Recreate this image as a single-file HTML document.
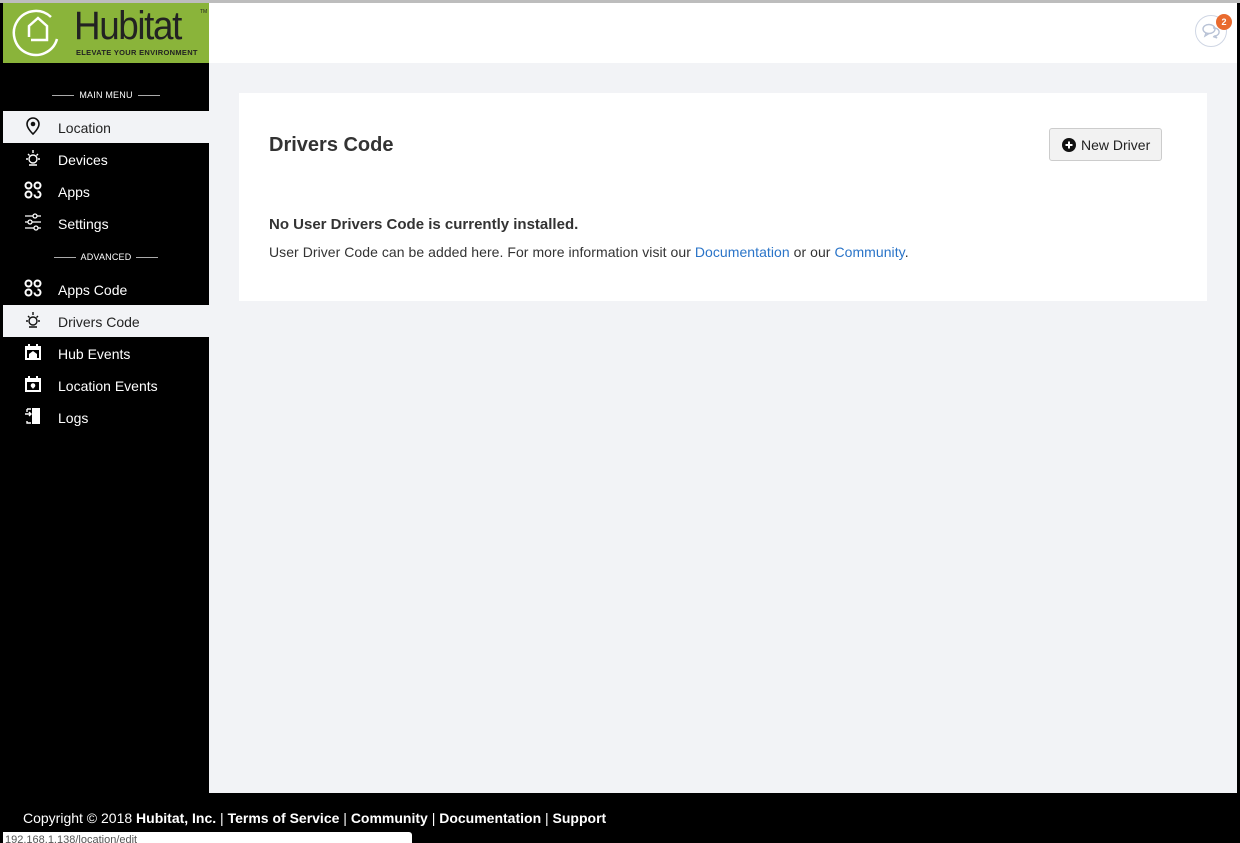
<!DOCTYPE html>
<html><head><meta charset="utf-8"><style>
*{box-sizing:border-box;margin:0;padding:0}
body{width:1240px;height:843px;position:relative;overflow:hidden;background:#000;font-family:"Liberation Sans",Arial,sans-serif;color:#333}
.topline{position:absolute;left:0;top:0;width:1240px;height:3px;background:#bdbdbd}
.header{position:absolute;left:209px;top:3px;width:1028px;height:60px;background:#fff}
.main{position:absolute;left:209px;top:63px;width:1028px;height:730px;background:#f2f3f6}
.logo{position:absolute;left:3px;top:3px;width:206px;height:60px;background:#8ab43a}
.side{position:absolute;left:3px;top:63px;width:206px;height:730px;background:#000}
.sec{position:absolute;left:0;width:206px;text-align:center;color:#fff;font-size:9px;letter-spacing:.2px}
.sec span{display:inline-block;width:22px;height:1px;background:#aaa;vertical-align:middle;margin:0 5px}
.item{position:absolute;left:0;width:206px;height:32px;color:#fff;font-size:14px;line-height:34px;padding-left:55px}
.item.act{background:#f2f3f6;color:#222}
.item svg{position:absolute;left:21px;top:6px}
.card{position:absolute;left:239px;top:93px;width:968px;height:208px;background:#fff}
.btn{position:absolute;left:810px;top:35px;width:113px;height:33px;border:1px solid #ccc;border-radius:3px;background:#f2f2f2;font-size:14px;color:#222;line-height:33px;padding-left:31px}
.footer{position:absolute;left:23px;top:810px;color:#fff;font-size:14px}
.footer b{font-weight:bold}
a{color:#2a74c8;text-decoration:none}
</style></head><body>
<div class="topline"></div>
<div class="header">
 <div style="position:absolute;left:986px;top:12px;width:32px;height:32px;border:1px solid #cfd6e4;border-radius:50%"></div>
 <svg style="position:absolute;left:993px;top:19px" width="18" height="18" viewBox="0 0 18 18" fill="none" stroke="#b9c3d6" stroke-width="1.4"><ellipse cx="7" cy="7" rx="6" ry="4.5"/><path d="M4 11 L3 14 L7 11.5"/><path d="M11 6 a5 4 0 1 1 2 8 l2 2 l-4 -1.5"/></svg>
 <div style="position:absolute;left:1007px;top:11px;width:16px;height:16px;border-radius:50%;background:#e96a2e;color:#fff;font-size:9px;font-weight:bold;text-align:center;line-height:16px">2</div>
</div>
<div class="main"></div>
<div class="logo">
 <svg style="position:absolute;left:8px;top:6px" width="56" height="50" viewBox="0 0 56 50" fill="none" stroke="#fff" stroke-width="2.5"><path d="M40 8 A22 22 0 1 0 46 30"/><path d="M18 28 V17 L27 9 L36 17 V31 H20"/></svg>
 <div style="position:absolute;left:71px;top:1px;font-size:40px;color:#222;letter-spacing:-1.5px;line-height:44px;transform:scaleX(0.92);transform-origin:left">Hubitat</div>
 <div style="position:absolute;left:197px;top:6px;font-size:5px;color:#222">TM</div>
 <div style="position:absolute;left:73px;top:45px;font-size:7.5px;font-weight:bold;color:#222;letter-spacing:.3px">ELEVATE YOUR ENVIRONMENT</div>
</div>
<div class="side">
 <div class="sec" style="top:27px"><span></span>MAIN MENU<span></span></div>
 <div class="item act" style="top:48px"><svg width="18" height="18" viewBox="0 0 18 18"><path d="M9 1a6 6 0 0 0-6 6c0 4.5 6 10 6 10s6-5.5 6-10a6 6 0 0 0-6-6z" fill="none" stroke="#111" stroke-width="1.6"/><circle cx="9" cy="7" r="2.3" fill="#111"/></svg>Location</div>
 <div class="item" style="top:80px"><svg width="18" height="18" viewBox="0 0 18 18" fill="none" stroke="#fff" stroke-width="1.4"><circle cx="9" cy="10" r="4"/><path d="M9 1v3M2 10h2M14 10h2M4 5l1.5 1.5M14 5l-1.5 1.5M5 16h8"/></svg>Devices</div>
 <div class="item" style="top:112px"><svg width="18" height="18" viewBox="0 0 18 18" fill="none" stroke="#fff" stroke-width="2"><circle cx="4.5" cy="4.5" r="3"/><circle cx="13.5" cy="4.5" r="3"/><circle cx="4.5" cy="13.5" r="3"/><path d="M10.5 13.5a3 3 0 1 0 3-3"/></svg>Apps</div>
 <div class="item" style="top:144px"><svg width="18" height="18" viewBox="0 0 18 18" fill="none" stroke="#fff" stroke-width="1.3"><path d="M1 3h16M1 9h16M1 15h16"/><circle cx="11" cy="3" r="2" fill="#000"/><circle cx="6" cy="9" r="2" fill="#000"/><circle cx="12" cy="15" r="2" fill="#000"/></svg>Settings</div>
 <div class="sec" style="top:189px"><span></span>ADVANCED<span></span></div>
 <div class="item" style="top:210px"><svg width="18" height="18" viewBox="0 0 18 18" fill="none" stroke="#fff" stroke-width="2"><circle cx="4.5" cy="4.5" r="3"/><circle cx="13.5" cy="4.5" r="3"/><circle cx="4.5" cy="13.5" r="3"/><path d="M10.5 13.5a3 3 0 1 0 3-3"/></svg>Apps Code</div>
 <div class="item act" style="top:242px"><svg width="18" height="18" viewBox="0 0 18 18" fill="none" stroke="#111" stroke-width="1.4"><circle cx="9" cy="10" r="4"/><path d="M9 1v3M2 10h2M14 10h2M4 5l1.5 1.5M14 5l-1.5 1.5M5 16h8"/></svg>Drivers Code</div>
 <div class="item" style="top:274px"><svg width="18" height="18" viewBox="0 0 18 18"><rect x="1" y="3" width="16" height="14" fill="#fff"/><rect x="3" y="7" width="12" height="8" fill="#000"/><path d="M5 15v-4l4-3 4 3v4z" fill="#fff"/><rect x="4" y="1" width="2" height="3" fill="#fff"/><rect x="12" y="1" width="2" height="3" fill="#fff"/></svg>Hub Events</div>
 <div class="item" style="top:306px"><svg width="18" height="18" viewBox="0 0 18 18"><rect x="1" y="3" width="16" height="14" fill="#fff"/><rect x="3" y="7" width="12" height="8" fill="#000"/><circle cx="9" cy="10.5" r="2.3" fill="#fff"/><path d="M7 11l2 3 2-3z" fill="#fff"/><rect x="4" y="1" width="2" height="3" fill="#fff"/><rect x="12" y="1" width="2" height="3" fill="#fff"/></svg>Location Events</div>
 <div class="item" style="top:338px"><svg width="18" height="18" viewBox="0 0 18 18"><path d="M8 1h8v16H8z" fill="#fff"/><path d="M1 7h6M5 5l2 2-2 2M3 2h4M3 2v3M3 14v2h4" stroke="#fff" stroke-width="1.4" fill="none"/></svg>Logs</div>
</div>
<div class="card">
 <div style="position:absolute;left:30px;top:41px;font-size:20px;font-weight:bold;color:#333">Drivers Code</div>
 <div class="btn"><svg style="position:absolute;left:12px;top:9px" width="14" height="14" viewBox="0 0 14 14"><circle cx="7" cy="7" r="7" fill="#111"/><path d="M7 3.5v7M3.5 7h7" stroke="#fff" stroke-width="2"/></svg>New Driver</div>
 <div style="position:absolute;left:30px;top:123px;font-size:15px;font-weight:bold;color:#333">No User Drivers Code is currently installed.</div>
 <div style="position:absolute;left:30px;top:151px;font-size:14px;color:#333;letter-spacing:.05px">User Driver Code can be added here. For more information visit our <a>Documentation</a> or our <a>Community</a>.</div>
</div>
<div class="footer">Copyright © 2018 <b>Hubitat, Inc.</b> | <b>Terms of Service</b> | <b>Community</b> | <b>Documentation</b> | <b>Support</b></div>
<div style="position:absolute;left:3px;top:832px;width:409px;height:11px;background:#fff;border-radius:0 3px 0 0;font-size:11px;color:#555;line-height:17px;padding-left:2px;overflow:hidden">192.168.1.138/location/edit</div>
</body></html>
